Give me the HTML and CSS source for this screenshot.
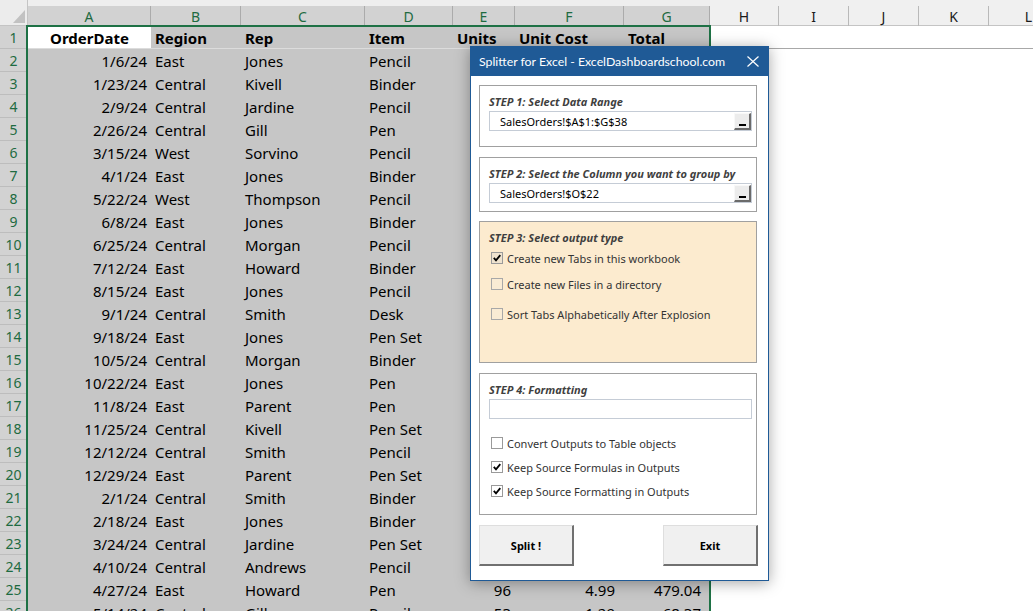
FILE: index.html
```html
<!DOCTYPE html>
<html>
<head>
<meta charset="utf-8">
<title>Splitter for Excel</title>
<link rel="stylesheet" href="styles.css">
</head>
<body>
<div class="app">
  <div class="sheet">
    <div class="corner">
      <svg class="tri" width="12" height="13" viewBox="0 0 12 13"><polygon points="0,13 12,13 12,0" fill="#c2c2c2"/></svg>
    </div>
    <div class="colhdrs sel">
      <div class="ch wa">A</div><div class="ch wb">B</div><div class="ch wc">C</div><div class="ch wd">D</div><div class="ch we">E</div><div class="ch wf">F</div><div class="ch wg">G</div>
    </div>
    <div class="colhdrs plain">
      <div class="ch wh">H</div><div class="ch wi">I</div><div class="ch wj">J</div><div class="ch wk">K</div><div class="ch wl">L</div>
    </div>
    <div class="rowhdrs">
      <div class="rh">1</div><div class="rh">2</div><div class="rh">3</div><div class="rh">4</div><div class="rh">5</div>
      <div class="rh">6</div><div class="rh">7</div><div class="rh">8</div><div class="rh">9</div><div class="rh">10</div>
      <div class="rh">11</div><div class="rh">12</div><div class="rh">13</div><div class="rh">14</div><div class="rh">15</div>
      <div class="rh">16</div><div class="rh">17</div><div class="rh">18</div><div class="rh">19</div><div class="rh">20</div>
      <div class="rh">21</div><div class="rh">22</div><div class="rh">23</div><div class="rh">24</div><div class="rh">25</div>
      <div class="rh">26</div>
    </div>
    <div class="cells sel">
      <div class="row first">
        <div class="c wa ctr b active">OrderDate</div><div class="c wb b">Region</div><div class="c wc b">Rep</div><div class="c wd b">Item</div><div class="c we b">Units</div><div class="c wf b">Unit Cost</div><div class="c wg b">Total</div>
      </div>
      <div class="row"><div class="c wa num">1/6/24</div><div class="c wb">East</div><div class="c wc">Jones</div><div class="c wd">Pencil</div><div class="c we"></div><div class="c wf"></div><div class="c wg"></div></div>
      <div class="row"><div class="c wa num">1/23/24</div><div class="c wb">Central</div><div class="c wc">Kivell</div><div class="c wd">Binder</div><div class="c we"></div><div class="c wf"></div><div class="c wg"></div></div>
      <div class="row"><div class="c wa num">2/9/24</div><div class="c wb">Central</div><div class="c wc">Jardine</div><div class="c wd">Pencil</div><div class="c we"></div><div class="c wf"></div><div class="c wg"></div></div>
      <div class="row"><div class="c wa num">2/26/24</div><div class="c wb">Central</div><div class="c wc">Gill</div><div class="c wd">Pen</div><div class="c we"></div><div class="c wf"></div><div class="c wg"></div></div>
      <div class="row"><div class="c wa num">3/15/24</div><div class="c wb">West</div><div class="c wc">Sorvino</div><div class="c wd">Pencil</div><div class="c we"></div><div class="c wf"></div><div class="c wg"></div></div>
      <div class="row"><div class="c wa num">4/1/24</div><div class="c wb">East</div><div class="c wc">Jones</div><div class="c wd">Binder</div><div class="c we"></div><div class="c wf"></div><div class="c wg"></div></div>
      <div class="row"><div class="c wa num">5/22/24</div><div class="c wb">West</div><div class="c wc">Thompson</div><div class="c wd">Pencil</div><div class="c we"></div><div class="c wf"></div><div class="c wg"></div></div>
      <div class="row"><div class="c wa num">6/8/24</div><div class="c wb">East</div><div class="c wc">Jones</div><div class="c wd">Binder</div><div class="c we"></div><div class="c wf"></div><div class="c wg"></div></div>
      <div class="row"><div class="c wa num">6/25/24</div><div class="c wb">Central</div><div class="c wc">Morgan</div><div class="c wd">Pencil</div><div class="c we"></div><div class="c wf"></div><div class="c wg"></div></div>
      <div class="row"><div class="c wa num">7/12/24</div><div class="c wb">East</div><div class="c wc">Howard</div><div class="c wd">Binder</div><div class="c we"></div><div class="c wf"></div><div class="c wg"></div></div>
      <div class="row"><div class="c wa num">8/15/24</div><div class="c wb">East</div><div class="c wc">Jones</div><div class="c wd">Pencil</div><div class="c we"></div><div class="c wf"></div><div class="c wg"></div></div>
      <div class="row"><div class="c wa num">9/1/24</div><div class="c wb">Central</div><div class="c wc">Smith</div><div class="c wd">Desk</div><div class="c we"></div><div class="c wf"></div><div class="c wg"></div></div>
      <div class="row"><div class="c wa num">9/18/24</div><div class="c wb">East</div><div class="c wc">Jones</div><div class="c wd">Pen Set</div><div class="c we"></div><div class="c wf"></div><div class="c wg"></div></div>
      <div class="row"><div class="c wa num">10/5/24</div><div class="c wb">Central</div><div class="c wc">Morgan</div><div class="c wd">Binder</div><div class="c we"></div><div class="c wf"></div><div class="c wg"></div></div>
      <div class="row"><div class="c wa num">10/22/24</div><div class="c wb">East</div><div class="c wc">Jones</div><div class="c wd">Pen</div><div class="c we"></div><div class="c wf"></div><div class="c wg"></div></div>
      <div class="row"><div class="c wa num">11/8/24</div><div class="c wb">East</div><div class="c wc">Parent</div><div class="c wd">Pen</div><div class="c we"></div><div class="c wf"></div><div class="c wg"></div></div>
      <div class="row"><div class="c wa num">11/25/24</div><div class="c wb">Central</div><div class="c wc">Kivell</div><div class="c wd">Pen Set</div><div class="c we"></div><div class="c wf"></div><div class="c wg"></div></div>
      <div class="row"><div class="c wa num">12/12/24</div><div class="c wb">Central</div><div class="c wc">Smith</div><div class="c wd">Pencil</div><div class="c we"></div><div class="c wf"></div><div class="c wg"></div></div>
      <div class="row"><div class="c wa num">12/29/24</div><div class="c wb">East</div><div class="c wc">Parent</div><div class="c wd">Pen Set</div><div class="c we"></div><div class="c wf"></div><div class="c wg"></div></div>
      <div class="row"><div class="c wa num">2/1/24</div><div class="c wb">Central</div><div class="c wc">Smith</div><div class="c wd">Binder</div><div class="c we"></div><div class="c wf"></div><div class="c wg"></div></div>
      <div class="row"><div class="c wa num">2/18/24</div><div class="c wb">East</div><div class="c wc">Jones</div><div class="c wd">Binder</div><div class="c we"></div><div class="c wf"></div><div class="c wg"></div></div>
      <div class="row"><div class="c wa num">3/24/24</div><div class="c wb">Central</div><div class="c wc">Jardine</div><div class="c wd">Pen Set</div><div class="c we"></div><div class="c wf"></div><div class="c wg"></div></div>
      <div class="row"><div class="c wa num">4/10/24</div><div class="c wb">Central</div><div class="c wc">Andrews</div><div class="c wd">Pencil</div><div class="c we"></div><div class="c wf"></div><div class="c wg"></div></div>
      <div class="row"><div class="c wa num">4/27/24</div><div class="c wb">East</div><div class="c wc">Howard</div><div class="c wd">Pen</div><div class="c we num">96</div><div class="c wf num acc">4.99</div><div class="c wg num acc">479.04</div></div>
      <div class="row"><div class="c wa num">5/14/24</div><div class="c wb">Central</div><div class="c wc">Gill</div><div class="c wd">Pencil</div><div class="c we num">53</div><div class="c wf num acc">1.29</div><div class="c wg num acc">68.37</div></div>
    </div>
    <div class="cells plain">
      <div class="row first"><div class="c wh"></div><div class="c wi"></div><div class="c wj"></div><div class="c wk"></div><div class="c wl"></div></div>
    </div>
  </div>

  <div class="dialog">
    <div class="titlebar">
      <span class="title">Splitter for Excel - ExcelDashboardschool.com</span>
      <svg class="close" width="12" height="11" viewBox="0 0 12 11"><path d="M0.5 0.5 L11.5 10.5 M11.5 0.5 L0.5 10.5" stroke="#ffffff" stroke-width="1.2" fill="none"/></svg>
    </div>
    <div class="dbody">
      <div class="step s1">
        <div class="slabel">STEP 1: Select Data Range</div>
        <div class="input"><span class="val">SalesOrders!$A$1:$G$38</span><span class="rb"><i></i></span></div>
      </div>
      <div class="step s2">
        <div class="slabel">STEP 2: Select the Column you want to group by</div>
        <div class="input"><span class="val">SalesOrders!$O$22</span><span class="rb"><i></i></span></div>
      </div>
      <div class="step s3">
        <div class="slabel">STEP 3: Select output type</div>
        <div class="cb cb1"><svg width="12" height="12" viewBox="0 0 12 12"><rect x="0.5" y="0.5" width="11" height="11" fill="#efe3cf" stroke="#9a9a9a"/><path d="M2.8 5.8 L5 8.3 L9.3 3.2" stroke="#000" stroke-width="1.8" fill="none"/></svg><span>Create new Tabs in this workbook</span></div>
        <div class="cb cb2"><svg width="12" height="12" viewBox="0 0 12 12"><rect x="0.5" y="0.5" width="11" height="11" fill="#f9ebd4" stroke="#a8a8a8"/></svg><span>Create new Files in a directory</span></div>
        <div class="cb cb3"><svg width="12" height="12" viewBox="0 0 12 12"><rect x="0.5" y="0.5" width="11" height="11" fill="#f9ebd4" stroke="#a8a8a8"/></svg><span>Sort Tabs Alphabetically After Explosion</span></div>
      </div>
      <div class="step s4">
        <div class="slabel">STEP 4: Formatting</div>
        <div class="input"></div>
        <div class="cb cb4"><svg width="12" height="12" viewBox="0 0 12 12"><rect x="0.5" y="0.5" width="11" height="11" fill="#ffffff" stroke="#9a9a9a"/></svg><span>Convert Outputs to Table objects</span></div>
        <div class="cb cb5"><svg width="12" height="12" viewBox="0 0 12 12"><rect x="0.5" y="0.5" width="11" height="11" fill="#ffffff" stroke="#9a9a9a"/><path d="M2.8 5.8 L5 8.3 L9.3 3.2" stroke="#000" stroke-width="1.8" fill="none"/></svg><span>Keep Source Formulas in Outputs</span></div>
        <div class="cb cb5"><svg width="12" height="12" viewBox="0 0 12 12"><rect x="0.5" y="0.5" width="11" height="11" fill="#ffffff" stroke="#9a9a9a"/><path d="M2.8 5.8 L5 8.3 L9.3 3.2" stroke="#000" stroke-width="1.8" fill="none"/></svg><span>Keep Source Formatting in Outputs</span></div>
      </div>
      <div class="btns">
        <button class="btn">Split !</button>
        <button class="btn">Exit</button>
      </div>
    </div>
  </div>
</div>
</body>
</html>
```

FILE: styles.css
```css
html, body {
  margin: 0;
  padding: 0;
}
body {
  width: 1033px;
  height: 611px;
  overflow: hidden;
  background: #ffffff;
  font-family: "Noto Sans", sans-serif;
}
.app {
  position: relative;
  width: 1033px;
  height: 611px;
  overflow: hidden;
}

/* ---------- sheet ---------- */
.sheet {
  display: grid;
  grid-template-columns: 28px 682px 1fr;
  grid-template-rows: 26px auto;
  height: 611px;
  overflow: hidden;
}
.corner {
  background: #ececec;
  border-right: 1px solid #c4c4c4;
  border-bottom: 1px solid #c4c4c4;
  box-sizing: border-box;
  display: flex;
  align-items: flex-end;
  justify-content: flex-end;
  padding: 0 2px 2px 0;
}
.colhdrs {
  display: flex;
  padding-top: 6px;
  box-sizing: border-box;
  background: #eeeeee;
}
.colhdrs.plain {
  background: #f0f0f0;
  border-bottom: 1px solid #c4c4c4;
}
.ch {
  height: 20px;
  flex: none;
  box-sizing: border-box;
  border-right: 1px solid #b9b9b9;
  display: flex;
  align-items: center;
  justify-content: center;
  font-size: 14px;
  color: #1a1a1a;
}
.sel .ch {
  background: #d2d2d2;
  color: #1e6b41;
  border-right-color: #ababab;
}
.wa { width: 123px; }
.wb { width: 90px; }
.wc { width: 124px; }
.wd { width: 88px; }
.we { width: 62px; }
.wf { width: 109px; }
.wg { width: 86px; }
.wh { width: 69px; }
.wi { width: 70px; }
.wj { width: 70px; }
.wk { width: 70px; }
.wl { width: 80px; }

.rowhdrs {
  display: flex;
  flex-direction: column;
  background: #d2d2d2;
}
.rh {
  flex: none;
  height: 23px;
  box-sizing: border-box;
  border-bottom: 1px solid #bdbdbd;
  padding: 1px 1px 0 0;
  text-align: center;
  line-height: 22px;
  font-size: 14px;
  color: #1e6b41;
}

.cells {
  display: flex;
  flex-direction: column;
}
.cells.sel {
  position: relative;
  background: #c6c6c6;
}
.cells.sel::after {
  content: "";
  position: absolute;
  left: -2px;
  top: -1px;
  right: -1px;
  bottom: -20px;
  border: 2px solid #1e7145;
  border-bottom: none;
  pointer-events: none;
}
.row {
  display: flex;
  height: 23px;
  flex: none;
}
.row.first {
  box-sizing: border-box;
  border-bottom: 1px solid #dcdcdc;
}
.cells.plain .row.first {
  border-bottom-color: #a8a8a8;
}
.c {
  flex: none;
  box-sizing: border-box;
  padding: 1px 4px 0;
  white-space: nowrap;
  overflow: hidden;
  font-size: 15px;
  line-height: 22px;
  color: #000000;
}
.c.num { text-align: right; }
.c.acc { padding-right: 9px; }
.c.ctr { text-align: center; }
.c.b { font-weight: 700; }
.c.active { background: #ffffff; }

/* ---------- dialog ---------- */
.dialog {
  position: absolute;
  left: 470px;
  top: 46px;
  width: 299px;
  height: 535px;
  box-sizing: border-box;
  border: 1px solid #1f5a96;
  background: #ffffff;
  box-shadow: 0 2px 14px rgba(0, 0, 0, 0.35);
  display: flex;
  flex-direction: column;
  font-family: "Noto Sans", sans-serif;
}
.titlebar {
  height: 29px;
  flex: none;
  background: #1f5a96;
  color: #ffffff;
  display: flex;
  align-items: center;
  justify-content: space-between;
  padding: 0 9px 0 8px;
}
.title {
  font-family: "Lato", "Noto Sans", sans-serif;
  font-size: 12.3px;
  white-space: nowrap;
}
.close { flex: none; }
.dbody {
  flex: 1;
  display: flex;
  flex-direction: column;
  padding: 9px 10px 0 8px;
}
.step {
  width: 278px;
  flex: none;
  box-sizing: border-box;
  border: 1px solid #a0a0a0;
  padding: 9px 4px 0 9px;
  display: flex;
  flex-direction: column;
}
.s1 { height: 62px; }
.s2 { height: 55px; margin-top: 10px; }
.s3 { height: 142px; margin-top: 9px; background: #fcebcf; }
.s4 { height: 142px; margin-top: 10px; }
.slabel {
  height: 14px;
  line-height: 14px;
  font-size: 11px;
  font-weight: 700;
  font-style: italic;
  color: #3f3f3f;
  white-space: nowrap;
}
.input {
  height: 20px;
  margin-top: 2px;
  box-sizing: border-box;
  border: 1px solid #c5ccd6;
  background: #ffffff;
  display: flex;
  align-items: center;
  padding: 0 0 0 10px;
  font-size: 11px;
  color: #000000;
}
.val {
  flex: 1;
  white-space: nowrap;
}
.rb {
  width: 17px;
  height: 17px;
  box-sizing: border-box;
  background: #ececec;
  border-top: 1px solid #f8f8f8;
  border-left: 1px solid #f8f8f8;
  border-right: 2px solid #6b6b6b;
  border-bottom: 2px solid #6b6b6b;
  display: flex;
  align-items: flex-end;
  justify-content: center;
  padding-bottom: 2px;
  margin-top: 1px;
}
.rb i {
  display: block;
  width: 7px;
  height: 2px;
  background: #000000;
}
.cb {
  height: 16px;
  display: flex;
  align-items: center;
  gap: 4px;
  padding-left: 2px;
  font-size: 11px;
  color: #333333;
  white-space: nowrap;
}
.cb svg { flex: none; }
.cb1 { margin-top: 5px; }
.cb2 { margin-top: 10px; }
.cb3 { margin-top: 14px; }
.cb4 { margin-top: 16px; }
.cb5 { margin-top: 8px; }

.btns {
  margin-top: 10px;
  display: flex;
  justify-content: space-between;
}
.btn {
  width: 95px;
  height: 41px;
  box-sizing: border-box;
  background: #f0f0f0;
  border-top: 1px solid #dedede;
  border-left: 1px solid #dedede;
  border-right: 2px solid #707070;
  border-bottom: 2px solid #707070;
  font-family: "Noto Sans", sans-serif;
  font-size: 11px;
  font-weight: 700;
  color: #000000;
  padding: 0;
}
```
